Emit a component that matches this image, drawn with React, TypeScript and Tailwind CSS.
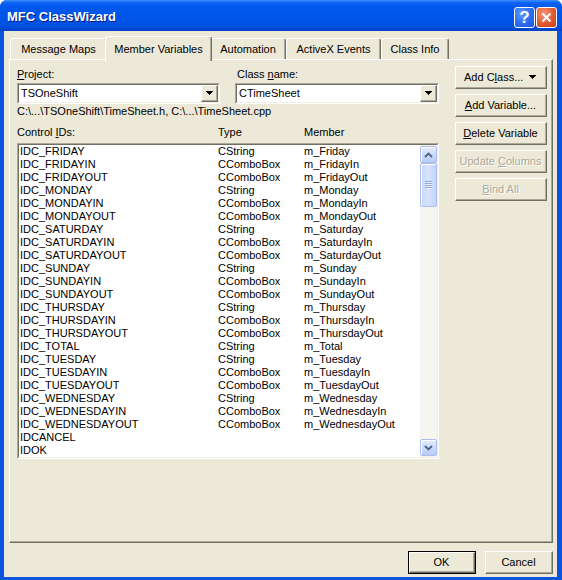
import type { ReactNode } from "react";

type Row = [string, string, string];

const ROWS: Row[] = [
  ["IDC_FRIDAY", "CString", "m_Friday"],
  ["IDC_FRIDAYIN", "CComboBox", "m_FridayIn"],
  ["IDC_FRIDAYOUT", "CComboBox", "m_FridayOut"],
  ["IDC_MONDAY", "CString", "m_Monday"],
  ["IDC_MONDAYIN", "CComboBox", "m_MondayIn"],
  ["IDC_MONDAYOUT", "CComboBox", "m_MondayOut"],
  ["IDC_SATURDAY", "CString", "m_Saturday"],
  ["IDC_SATURDAYIN", "CComboBox", "m_SaturdayIn"],
  ["IDC_SATURDAYOUT", "CComboBox", "m_SaturdayOut"],
  ["IDC_SUNDAY", "CString", "m_Sunday"],
  ["IDC_SUNDAYIN", "CComboBox", "m_SundayIn"],
  ["IDC_SUNDAYOUT", "CComboBox", "m_SundayOut"],
  ["IDC_THURSDAY", "CString", "m_Thursday"],
  ["IDC_THURSDAYIN", "CComboBox", "m_ThursdayIn"],
  ["IDC_THURSDAYOUT", "CComboBox", "m_ThursdayOut"],
  ["IDC_TOTAL", "CString", "m_Total"],
  ["IDC_TUESDAY", "CString", "m_Tuesday"],
  ["IDC_TUESDAYIN", "CComboBox", "m_TuesdayIn"],
  ["IDC_TUESDAYOUT", "CComboBox", "m_TuesdayOut"],
  ["IDC_WEDNESDAY", "CString", "m_Wednesday"],
  ["IDC_WEDNESDAYIN", "CComboBox", "m_WednesdayIn"],
  ["IDC_WEDNESDAYOUT", "CComboBox", "m_WednesdayOut"],
  ["IDCANCEL", "", ""],
  ["IDOK", "", ""],
];

// classic 3d edges
const RAISED =
  "border border-t-white border-l-white border-r-[#716f64] border-b-[#716f64]";
const SUNKEN_OUTER =
  "border border-t-[#aca899] border-l-[#aca899] border-r-white border-b-white";
const SUNKEN_INNER =
  "border border-t-[#716f64] border-l-[#716f64] border-r-[#f1efe2] border-b-[#f1efe2]";

function U({ children }: { children: ReactNode }) {
  return <span className="underline decoration-1 underline-offset-[1px]">{children}</span>;
}

function Button({
  children,
  disabled,
  className = "",
}: {
  children: ReactNode;
  disabled?: boolean;
  className?: string;
}) {
  return (
    <div className={`${RAISED} h-[23px] ${className}`}>
      <div
        className={`flex h-full items-center justify-center border-r border-b border-[#aca899] ${
          disabled ? "text-[#aca899] [text-shadow:1px_1px_0_#ffffff]" : "text-black"
        }`}
      >
        {children}
      </div>
    </div>
  );
}

function DownTriangle() {
  return (
    <svg width="7" height="4" viewBox="0 0 7 4" shapeRendering="crispEdges">
      <path d="M0 0h7v1h-1v1h-1v1h-1v1h-1v-1h-1v-1h-1v-1h-1z" fill="#000" />
    </svg>
  );
}

function Combo({ value, className = "" }: { value: string; className?: string }) {
  return (
    <div className={`${SUNKEN_OUTER} h-[21px] ${className}`}>
      <div className={`${SUNKEN_INNER} flex h-full bg-white`}>
        <div className="flex-1 pl-[2px] leading-[17px]">{value}</div>
        <div className={`${RAISED} h-full w-[17px] bg-[#ece9d8]`}>
          <div className="flex h-full items-center justify-center border-r border-b border-[#aca899]">
            <DownTriangle />
          </div>
        </div>
      </div>
    </div>
  );
}

function ScrollButton({ dir }: { dir: "up" | "down" }) {
  return (
    <div className="flex h-[17px] w-full items-center justify-center rounded-[2px] border border-[#a9bdee] bg-[linear-gradient(180deg,#e4ecfe_0%,#cbd9fc_55%,#b7cbf7_100%)] shadow-[inset_1px_1px_0_#ffffff]">
      <svg width="9" height="6" viewBox="0 0 9 6">
        <path
          d={dir === "up" ? "M1 5L4.5 1.5L8 5" : "M1 1L4.5 4.5L8 1"}
          fill="none"
          stroke="#4d6185"
          strokeWidth="1.8"
        />
      </svg>
    </div>
  );
}

function ScrollBar() {
  return (
    <div className="flex h-full w-[17px] flex-col bg-[#f6f5f0] py-[1px]">
      <ScrollButton dir="up" />
      <div className="flex h-[44px] w-full items-center justify-center rounded-[2px] border border-[#a9bdee] bg-[linear-gradient(90deg,#c9d8fc_0%,#d6e2fd_50%,#c3d3fa_100%)] shadow-[inset_1px_1px_0_#ffffff]">
        <svg width="7" height="8" viewBox="0 0 7 8">
          <path d="M0 0.5h7M0 2.5h7M0 4.5h7M0 6.5h7" stroke="#8fa9e6" strokeWidth="1" />
          <path d="M1 1.5h7M1 3.5h7M1 5.5h7M1 7.5h7" stroke="#eef3ff" strokeWidth="1" />
        </svg>
      </div>
      <div className="flex-1" />
      <ScrollButton dir="down" />
    </div>
  );
}

function TitleBar() {
  return (
    <div className="flex h-[31px] shrink-0 items-center justify-between bg-[linear-gradient(180deg,#3d90ff_0%,#0c63f3_9%,#0058ee_22%,#0055e7_55%,#0051e0_86%,#0040c2_100%)] pl-[7px] pr-[5px]">
      <span className="pt-[3px] text-[13px] font-bold text-white [text-shadow:1px_1px_0_#0a1883]">
        MFC ClassWizard
      </span>
      <div className="flex gap-[1px] pt-[3px]">
        <div className="flex h-[21px] w-[21px] items-center justify-center rounded-[3px] border border-white bg-[radial-gradient(circle_at_35%_30%,#5c9bff_0%,#2c6cf0_55%,#1c55de_100%)]">
          <span className="text-[17px] leading-none font-bold text-white">?</span>
        </div>
        <div className="flex h-[21px] w-[21px] items-center justify-center rounded-[3px] border border-white bg-[radial-gradient(circle_at_35%_30%,#f59a76_0%,#e2582e_55%,#c8421c_100%)]">
          <svg width="11" height="11" viewBox="0 0 11 11">
            <path d="M1.5 1.5L9.5 9.5M9.5 1.5L1.5 9.5" stroke="#fff" strokeWidth="2.2" />
          </svg>
        </div>
      </div>
    </div>
  );
}

const TAB =
  "flex h-[21px] items-center justify-center rounded-t-[3px] border-t border-l border-r border-t-white border-l-white border-r-[#716f64] shadow-[inset_-1px_0_0_#aca899]";

function Tabs() {
  return (
    <div className="flex h-[28px] shrink-0 items-end pl-[6px]">
      <div className={`${TAB} w-[97px]`}>Message Maps</div>
      <div className="relative z-10 -mx-[2px] mb-[-2px] flex h-[25px] w-[107px] justify-center rounded-t-[3px] border-t border-l border-r border-t-white border-l-white border-r-[#716f64] bg-[#ece9d8] pt-[4px] shadow-[inset_-1px_0_0_#aca899]">
        Member Variables
      </div>
      <div className={`${TAB} w-[76px]`}>Automation</div>
      <div className={`${TAB} w-[95px]`}>ActiveX Events</div>
      <div className={`${TAB} w-[68px]`}>Class Info</div>
    </div>
  );
}

function MemberList() {
  return (
    <div className={`${SUNKEN_OUTER} mt-[4px] h-[316px] w-[422px]`}>
      <div className={`${SUNKEN_INNER} flex h-full bg-white`}>
        <div className="flex-1 overflow-hidden pl-[1px]">
          {ROWS.map(([id, type, member]) => (
            <div key={id} className="flex h-[13px] leading-[13px] whitespace-nowrap">
              <span className="w-[198px]">{id}</span>
              <span className="w-[86px]">{type}</span>
              <span>{member}</span>
            </div>
          ))}
        </div>
        <ScrollBar />
      </div>
    </div>
  );
}

function Panel() {
  return (
    <div className={`${RAISED} ml-[5px] h-[484px] w-[544px] shrink-0`}>
      <div className="flex h-full border-r border-b border-[#aca899] pl-[7px]">
        <div className="mt-[8px] flex w-[422px] flex-col">
          <div className="flex h-[13px] leading-[13px]">
            <span className="w-[220px]">
              <U>P</U>roject:
            </span>
            <span>
              Class <U>n</U>ame:
            </span>
          </div>
          <div className="mt-[2px] flex">
            <Combo value="TSOneShift" className="w-[203px]" />
            <Combo value="CTimeSheet" className="ml-[15px] w-[204px]" />
          </div>
          <div className="mt-[1px] h-[13px] leading-[13px] whitespace-nowrap">
            {"C:\\...\\TSOneShift\\TimeSheet.h, C:\\...\\TimeSheet.cpp"}
          </div>
          <div className="mt-[8px] flex h-[13px] leading-[13px]">
            <span className="w-[201px]">
              Control <U>I</U>Ds:
            </span>
            <span className="w-[86px]">Type</span>
            <span>Member</span>
          </div>
          <MemberList />
        </div>

        <div className="mt-[6px] ml-[16px] flex w-[92px] flex-col gap-[5px]">
          <Button>
            <div className="flex w-full items-center justify-between pr-[9px] pl-[8px]">
              <span>
                Add C<U>l</U>ass...
              </span>
              <DownTriangle />
            </div>
          </Button>
          <Button>
            <span>
              <U>A</U>dd Variable...
            </span>
          </Button>
          <Button>
            <span>
              <U>D</U>elete Variable
            </span>
          </Button>
          <Button disabled>
            <span>
              Update <U>C</U>olumns
            </span>
          </Button>
          <Button disabled>
            <span>
              <U>B</U>ind All
            </span>
          </Button>
        </div>
      </div>
    </div>
  );
}

export default function App() {
  return (
    <div className="h-[580px] w-[562px] bg-white font-['Liberation_Sans',Arial,sans-serif] text-[11px] text-black select-none">
      <div className="flex h-full flex-col overflow-hidden rounded-t-[7px] bg-[#0a53df]">
        <TitleBar />
        <div className="flex min-h-0 flex-1 pr-[5px] pb-[3px] pl-[4px]">
          <div className="flex flex-1 flex-col bg-[#ece9d8]">
            <Tabs />
            <Panel />
            <div className="mt-[8px] flex justify-end gap-[9px] pr-[4px]">
              <div className="h-[23px] w-[68px] border border-black">
                <Button className="h-full">OK</Button>
              </div>
              <Button className="w-[68px]">Cancel</Button>
            </div>
          </div>
        </div>
      </div>
    </div>
  );
}
